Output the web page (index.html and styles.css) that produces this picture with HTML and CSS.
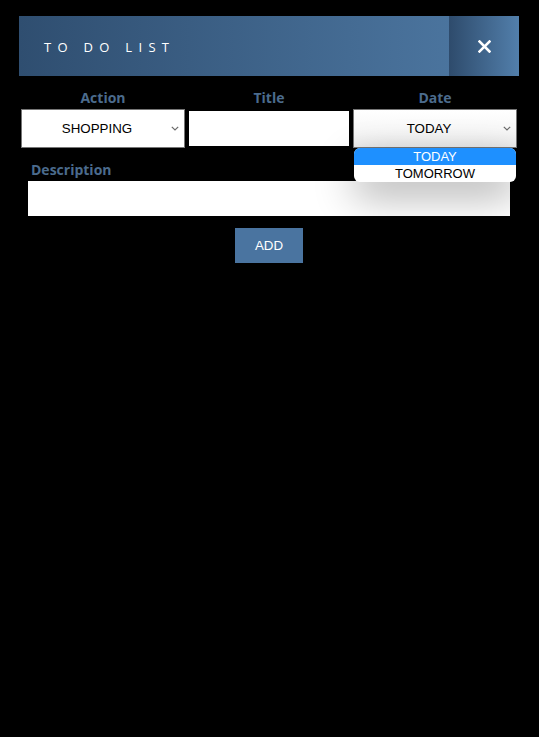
FILE: index.html
```html
<!DOCTYPE html>
<html lang="en">
<head>
<meta charset="utf-8">
<title>To Do List</title>
<link rel="stylesheet" href="styles.css">
</head>
<body>
<div class="app">
  <header class="bar">
    <h1 class="bar-title">TO DO LIST</h1>
    <button class="close" type="button" aria-label="Close">
      <svg width="13" height="13" viewBox="0 0 13 13"><path d="M1.5 1.5 L11.5 11.5 M11.5 1.5 L1.5 11.5" stroke="#fff" stroke-width="2.5" stroke-linecap="square" fill="none"/></svg>
    </button>
  </header>
  <form class="form">
    <div class="row">
      <div class="field field-action">
        <label class="label">Action</label>
        <div class="select">
          <span class="select-text">SHOPPING</span>
          <svg class="chev" width="8" height="5" viewBox="0 0 8 5"><path d="M0.8 0.8 L4 4 L7.2 0.8" stroke="#6b6b6b" stroke-width="1.2" fill="none"/></svg>
        </div>
      </div>
      <div class="field field-title">
        <label class="label">Title</label>
        <input class="text-input" type="text">
      </div>
      <div class="field field-date">
        <label class="label">Date</label>
        <div class="select select-open">
          <span class="select-text">TODAY</span>
          <svg class="chev" width="8" height="5" viewBox="0 0 8 5"><path d="M0.8 0.8 L4 4 L7.2 0.8" stroke="#6b6b6b" stroke-width="1.2" fill="none"/></svg>
        </div>
        <ul class="menu">
          <li class="menu-item is-active">TODAY</li>
          <li class="menu-item">TOMORROW</li>
        </ul>
      </div>
    </div>
    <div class="desc">
      <label class="label label-left">Description</label>
      <input class="desc-input" type="text">
    </div>
    <div class="actions">
      <button class="add" type="button">ADD</button>
    </div>
  </form>
</div>
</body>
</html>
```

FILE: styles.css
```css
html, body {
  margin: 0;
  padding: 0;
  background: #000;
}
body {
  font-family: "Open Sans", "Liberation Sans", sans-serif;
  width: 539px;
  height: 737px;
}
.app {
  width: 500px;
  margin: 16px 0 0 19px;
}
.bar {
  display: flex;
  height: 60px;
  background: linear-gradient(90deg, #2f4e70 0%, #4f7aa5 100%);
}
.bar-title {
  flex: 1;
  margin: 0;
  padding: 1px 0 0 25px;
  font-size: 13px;
  font-weight: 400;
  letter-spacing: 6.3px;
  line-height: 60px;
  color: #fff;
}
.close {
  width: 70px;
  height: 60px;
  border: 0;
  padding: 0;
  background: linear-gradient(90deg, #2e4b6c 0%, #527fab 100%);
  display: flex;
  align-items: center;
  justify-content: center;
}
.close svg { display: block; margin-top: 1px; }
.form {
  padding-top: 12px;
}
.row {
  display: flex;
  padding: 0 2px;
  gap: 4px;
}
.field {
  display: flex;
  flex-direction: column;
  align-items: center;
  position: relative;
}
.field-action, .field-date { width: 164px; }
.field-title { width: 160px; }
.label {
  display: block;
  font-size: 14px;
  font-weight: 700;
  line-height: 19px;
  height: 19px;
  margin-bottom: 2px;
  color: #4b6b8d;
}
.select {
  box-sizing: border-box;
  width: 164px;
  height: 39px;
  padding-right: 12px;
  border: 1px solid #767676;
  background: #fff;
  display: flex;
  align-items: center;
  justify-content: center;
  position: relative;
  font-family: "Liberation Sans", Arial, sans-serif;
  font-size: 13.33px;
  color: #000;
}
.select-open {
  background: linear-gradient(180deg, #ffffff 0%, #f7f7f7 60%, #ececec 100%);
}
.chev {
  position: absolute;
  right: 5px;
  top: 16px;
}
.text-input {
  box-sizing: border-box;
  width: 160px;
  height: 35px;
  margin-top: 2px;
  border: 0;
  padding: 0;
  background: #fff;
}
.menu {
  position: absolute;
  left: 1px;
  top: 60px;
  width: 162px;
  margin: 0;
  padding: 0;
  list-style: none;
  background: #fff;
  border-radius: 6px;
  overflow: hidden;
  box-shadow: 0 14px 40px rgba(0, 0, 0, 0.32);
  z-index: 2;
  font-family: "Liberation Sans", Arial, sans-serif;
  font-size: 13px;
}
.menu-item {
  height: 17px;
  line-height: 17px;
  text-align: center;
  color: #000;
}
.menu-item.is-active {
  background: #1e90ff;
  color: #fff;
}
.desc {
  padding: 12px 9px 0;
}
.label-left {
  padding-left: 3px;
}
.desc-input {
  display: block;
  box-sizing: border-box;
  width: 482px;
  height: 35px;
  border: 0;
  padding: 0;
  background: #fff;
}
.actions {
  display: flex;
  justify-content: center;
  padding-top: 12px;
}
.add {
  width: 68px;
  height: 35px;
  border: 0;
  padding: 0;
  background: #4a74a0;
  color: #fff;
  font-family: "Liberation Sans", Arial, sans-serif;
  font-size: 13.33px;
}
```
